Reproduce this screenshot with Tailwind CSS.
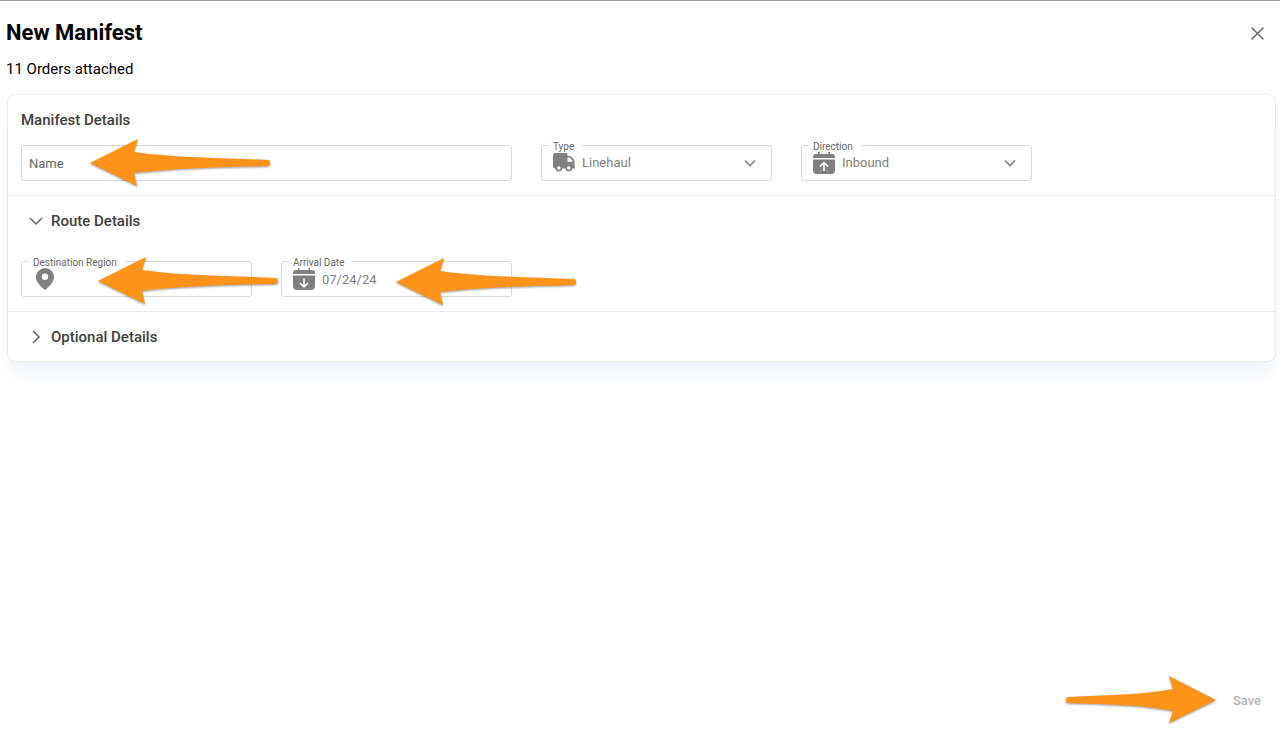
<!DOCTYPE html>
<html lang="en">
<head>
    <meta charset="UTF-8" />
    <meta name="viewport" content="width=device-width, initial-scale=1" />
    <title>New Manifest</title>
    <script src="https://cdn.jsdelivr.net/npm/@tailwindcss/browser@4"></script>
</head>
<body class="min-h-screen flex flex-col bg-white border-t border-[#a3a3a3] font-[Roboto,sans-serif] text-black">

<!-- Shared shapes -->
<svg class="hidden" aria-hidden="true">
    <symbol id="arrow-left" viewBox="0 0 182 50">
        <path d="M0 24 L48 0 L44 13 C85 19 135 19 178 21 Q180 21 180 24 Q180 27 178 27 C135 28 85 29 44 34 L47 47Z" fill="#ff931a" />
    </symbol>
    <symbol id="chevron-down" viewBox="0 0 12 8">
        <path d="M1 1.5 L6 6.5 L11 1.5" fill="none" stroke="currentColor" stroke-width="1.6" />
    </symbol>
</svg>

<!-- Header -->
<header class="flex items-start justify-between pl-1.5 pr-4 pt-[18px]">
    <div>
        <h1 class="text-[22px] leading-7 font-bold">New Manifest</h1>
        <p class="mt-3 text-[15px] leading-5">11 Orders attached</p>
    </div>
    <button type="button" aria-label="Close" class="h-7 flex items-center text-[#757575]">
        <svg class="w-[13px] h-[13px]" viewBox="0 0 13 13"><path d="M.6 .6 L12.4 12.4 M12.4 .6 L.6 12.4" fill="none" stroke="currentColor" stroke-width="1.5" /></svg>
    </button>
</header>

<!-- Form -->
<main class="flex-1 pl-[7px] pr-1 pt-[15px]">
    <form id="manifest-form" class="rounded-lg border border-[#ebebeb] bg-white divide-y divide-[#ebebeb] text-[13px] text-[#808080] shadow-[0_16px_20px_-4px_#f0f3ff]">

        <section class="px-[13px] pt-[15px] pb-3.5">
            <h2 class="text-[15px] leading-5 font-medium text-[#404040]">Manifest Details</h2>
            <div class="mt-[15px] grid grid-cols-[repeat(4,231px)] gap-x-[29px]">
                <div class="relative col-span-2">
                    <input type="text" aria-label="Name" placeholder="Name" class="block w-full h-9 rounded-[3px] border border-[#d9d9d9] px-[7px] placeholder:text-[#666]" />
                    <svg class="absolute left-[69px] -top-1.5 w-[182px] h-[50px] drop-shadow-[0_1px_1px_#00000066]"><use href="#arrow-left" /></svg>
                </div>

                <div class="relative">
                    <label for="type" class="absolute left-2 -top-1 pl-1 pr-2 bg-white text-[10px] leading-3 text-[#666]">Type</label>
                    <svg class="absolute left-3 top-2 w-[22px] h-[19px]" viewBox="0 0 22 19" fill="#808080">
                        <path d="M2 0h11a1.5 1.5 0 0 1 1.5 1.5V3H17c.6 0 1 .2 1.4.6l2.700 3.100c.3.3.4.7.4 1.100v5.700c.6.2.6 1.800 0 2H2a2 2 0 0 1-2-2V2a2 2 0 0 1 2-2Z" />
                        <path d="M14.500 4.500h2.200l2.800 3.200v1h-5Z" fill="#fff" />
                        <circle cx="5.8" cy="15" r="2.6" fill="#fff" stroke="#808080" stroke-width="1.7" />
                        <circle cx="15.8" cy="15" r="2.6" fill="#fff" stroke="#808080" stroke-width="1.7" />
                    </svg>
                    <select id="type" class="block w-full h-9 appearance-none rounded-[3px] border border-[#d9d9d9] pl-10 pr-8">
                        <option>Linehaul</option>
                    </select>
                    <svg class="absolute right-4 top-[14px] w-3 h-2 pointer-events-none"><use href="#chevron-down" /></svg>
                </div>

                <div class="relative">
                    <label for="direction" class="absolute left-2 -top-1 pl-1 pr-2 bg-white text-[10px] leading-3 text-[#666]">Direction</label>
                    <svg class="absolute left-3 top-[7px] w-[22px] h-[22px]" viewBox="0 0 22 22" fill="#808080">
                        <path d="M0 6V5a3 3 0 0 1 3-3h2V0h1.500v2h9V0H17v2h2a3 3 0 0 1 3 3v1ZM0 7.500h22V18a4 4 0 0 1-4 4H4a4 4 0 0 1-4-4Z" />
                        <path d="M11 19v-8M7 14.500l4-3.800 4 3.800" fill="none" stroke="#fff" stroke-width="1.6" />
                    </svg>
                    <select id="direction" class="block w-full h-9 appearance-none rounded-[3px] border border-[#d9d9d9] pl-10 pr-8">
                        <option>Inbound</option>
                    </select>
                    <svg class="absolute right-4 top-[14px] w-3 h-2 pointer-events-none"><use href="#chevron-down" /></svg>
                </div>
            </div>
        </section>

        <section class="px-[13px] pt-[15px] pb-3.5">
            <h2 class="text-[15px] leading-5 font-medium text-[#404040]">
                <button type="button" aria-expanded="true" class="flex items-center gap-2 pl-2">
                    <svg class="w-[14px] h-[14px]" viewBox="0 0 14 14"><path d="M1 4 L7 10 L13 4" fill="none" stroke="#666" stroke-width="1.5" /></svg>
                    Route Details
                </button>
            </h2>
            <div class="mt-[30px] grid grid-cols-[repeat(4,231px)] gap-x-[29px]">
                <div class="relative">
                    <label for="region" class="absolute left-2 -top-1 pl-1 pr-2 bg-white text-[10px] leading-3 text-[#666]">Destination Region</label>
                    <svg class="absolute left-[15px] top-[7px] w-[18px] h-[22px]" viewBox="0 0 18 22" fill="#808080">
                        <path fill-rule="evenodd" d="M9 0a9 9 0 0 1 9 9c0 4.600-4.200 9.400-9 13C4.200 18.400 0 13.600 0 9a9 9 0 0 1 9-9Zm0 5.600a3.200 3.200 0 1 0 0 6.400 3.200 3.200 0 0 0 0-6.400Z" />
                    </svg>
                    <select id="region" class="block w-full h-9 appearance-none rounded-[3px] border border-[#d9d9d9] pl-10 pr-8">
                        <option></option>
                    </select>
                    <svg class="absolute right-4 top-[14px] w-3 h-2 pointer-events-none"><use href="#chevron-down" /></svg>
                    <svg class="absolute z-10 left-[77px] -top-1 w-[182px] h-[50px] drop-shadow-[0_1px_1px_#00000066]"><use href="#arrow-left" /></svg>
                </div>

                <div class="relative">
                    <label for="arrival" class="absolute left-2 -top-1 pl-1 pr-2 bg-white text-[10px] leading-3 text-[#666]">Arrival Date</label>
                    <svg class="absolute left-3 top-[7px] w-[22px] h-[22px]" viewBox="0 0 22 22" fill="#808080">
                        <path d="M0 6V5a3 3 0 0 1 3-3h2V0h1.500v2h9V0H17v2h2a3 3 0 0 1 3 3v1ZM0 7.500h22V18a4 4 0 0 1-4 4H4a4 4 0 0 1-4-4Z" />
                        <path d="M11 10.500v8M7 15l4 3.800 4-3.800" fill="none" stroke="#fff" stroke-width="1.6" />
                    </svg>
                    <input id="arrival" type="text" value="07/24/24" class="block w-full h-9 rounded-[3px] border border-[#d9d9d9] pl-10 pr-8" />
                    <svg class="absolute left-[115px] -top-[3px] w-[182px] h-[50px] drop-shadow-[0_1px_1px_#00000066]"><use href="#arrow-left" /></svg>
                </div>
            </div>
        </section>

        <section class="px-[13px] pt-[15px] pb-3.5">
            <h2 class="text-[15px] leading-5 font-medium text-[#404040]">
                <button type="button" aria-expanded="false" class="flex items-center gap-2 pl-2">
                    <svg class="w-[14px] h-[14px]" viewBox="0 0 14 14"><path d="M4 1 L10 7 L4 13" fill="none" stroke="#666" stroke-width="1.5" /></svg>
                    Optional Details
                </button>
            </h2>
        </section>
    </form>
</main>

<!-- Footer -->
<footer class="flex items-center justify-end gap-4 pr-[19px] pb-1.5">
    <svg class="w-[151px] h-[50px] drop-shadow-[0_1px_1px_#00000066]" viewBox="0 0 151 50">
        <path d="M150 24 L103 0 L107 13 C75 19 40 19 3 21 Q0 21 0 24 Q0 27 3 27 C40 28 75 29 107 35 L103 47Z" fill="#ff931a" />
    </svg>
    <button type="submit" form="manifest-form" disabled class="text-[13px] leading-5 font-medium text-[#b5b5b5]">Save</button>
</footer>

</body>
</html>
